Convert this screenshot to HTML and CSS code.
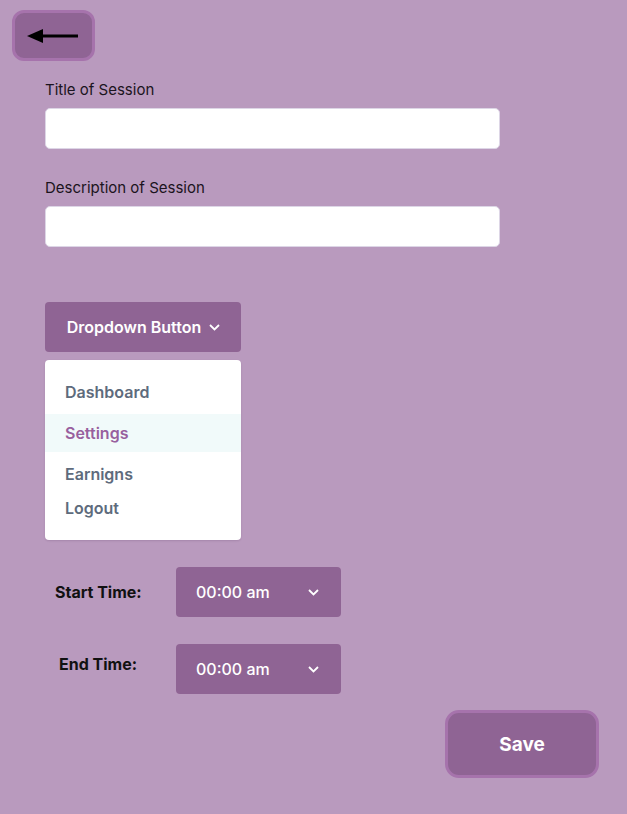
FILE: index.html
```html
<!DOCTYPE html>
<html>
<head>
<meta charset="utf-8">
<link rel="stylesheet" href="styles.css">
</head>
<body>
<div class="page">
  <button class="back" type="button" aria-label="Back">
    <svg width="52" height="16" viewBox="0 0 52 16"><polygon points="0,8 16,1 16,15" fill="#000"/><rect x="14" y="6.5" width="37" height="3" fill="#000"/></svg>
  </button>

  <div class="form">
    <label class="field">
      <span class="label">Title of Session</span>
      <input class="input" type="text">
    </label>
    <label class="field field2">
      <span class="label">Description of Session</span>
      <input class="input" type="text">
    </label>

    <div class="dropdown">
      <button class="dd-btn" type="button">Dropdown Button
        <svg class="chev" width="11" height="7" viewBox="0 0 11 7"><path d="M1 1l4.5 4.5 4.5-4.5" fill="none" stroke="#fff" stroke-width="1.8"/></svg>
      </button>
      <ul class="menu">
        <li class="item">Dashboard</li>
        <li class="item active">Settings</li>
        <li class="item">Earnigns</li>
        <li class="item last">Logout</li>
      </ul>
    </div>

    <div class="times">
      <div class="time-row">
        <span class="time-label">Start Time:</span>
        <button class="select" type="button">00:00 am
          <svg class="chev" width="11" height="7" viewBox="0 0 11 7"><path d="M1 1l4.5 4.5 4.5-4.5" fill="none" stroke="#fff" stroke-width="1.8"/></svg>
        </button>
      </div>
      <div class="time-row">
        <span class="time-label end">End Time:</span>
        <button class="select" type="button">00:00 am
          <svg class="chev" width="11" height="7" viewBox="0 0 11 7"><path d="M1 1l4.5 4.5 4.5-4.5" fill="none" stroke="#fff" stroke-width="1.8"/></svg>
        </button>
      </div>
    </div>
  </div>

  <div class="actions">
    <button class="save" type="button">Save</button>
  </div>
</div>
</body>
</html>
```

FILE: styles.css
```css
* { box-sizing: border-box; }
html, body { margin: 0; padding: 0; }
body {
  background: #b99abe;
  font-family: Inter, "Liberation Sans", sans-serif;
  width: 627px;
  height: 814px;
  overflow: hidden;
}
.page {
  padding: 10px 28px 0 12px;
}
.back {
  width: 83px;
  height: 51px;
  border-radius: 12px;
  background: #8f6494;
  border: 3px solid #a673ac;
  display: flex;
  align-items: center;
  justify-content: flex-start;
  padding: 0 0 0 12px;
  cursor: pointer;
}
.form {
  padding-left: 33px;
  margin-top: 20px;
}
.field {
  display: flex;
  flex-direction: column;
  width: 455px;
}
.field2 { margin-top: 30px; }
.label {
  font-size: 15px;
  line-height: 18px;
  color: #1b1420;
  margin-bottom: 9px;
}
.input {
  height: 41px;
  width: 455px;
  background: #fff;
  border: 1px solid #ddd6e6;
  border-radius: 5px;
  font: inherit;
  padding: 0 10px;
}
.dropdown {
  margin-top: 55px;
  width: 196px;
}
.dd-btn {
  width: 196px;
  height: 50px;
  background: #8f6494;
  border: 0;
  border-radius: 4px;
  color: #fff;
  font-family: inherit;
  font-size: 16px;
  font-weight: 600;
  display: flex;
  align-items: center;
  justify-content: center;
  gap: 8px;
  padding: 0 0 0 1px;
}
.chev { display: block; }
.menu {
  list-style: none;
  margin: 8px 0 0;
  padding: 18px 0 18px;
  background: #fff;
  border-radius: 4px;
  box-shadow: 0 1px 2px rgba(60, 30, 70, 0.15);
}
.item {
  font-size: 16px;
  font-weight: 600;
  color: #5e6b7c;
  padding: 0 20px;
  height: 28px;
  line-height: 28px;
}
.item.active {
  background: #f1fafa;
  color: #985f9e;
  height: 38px;
  line-height: 38px;
  margin: 8px 0 8px;
}
.item.last { margin-top: 6px; }
.times {
  margin-top: 27px;
  display: flex;
  flex-direction: column;
  gap: 27px;
}
.time-row {
  display: flex;
  align-items: center;
}
.time-label {
  width: 131px;
  padding-left: 10px;
  font-size: 16px;
  font-weight: 700;
  color: #111;
}
.time-label.end {
  padding-left: 14px;
  margin-bottom: 10px;
}
.select {
  width: 165px;
  height: 50px;
  background: #8f6494;
  border: 0;
  border-radius: 4px;
  color: #fff;
  font-family: inherit;
  font-size: 16px;
  font-weight: 500;
  display: flex;
  align-items: center;
  justify-content: space-between;
  padding: 0 22px 0 20px;
}
.actions {
  display: flex;
  justify-content: flex-end;
  margin-top: 16px;
}
.save {
  width: 154px;
  height: 68px;
  border-radius: 14px;
  background: #8f6494;
  border: 3px solid #a673ac;
  color: #fff;
  font-family: inherit;
  font-size: 19px;
  font-weight: 700;
}
```
